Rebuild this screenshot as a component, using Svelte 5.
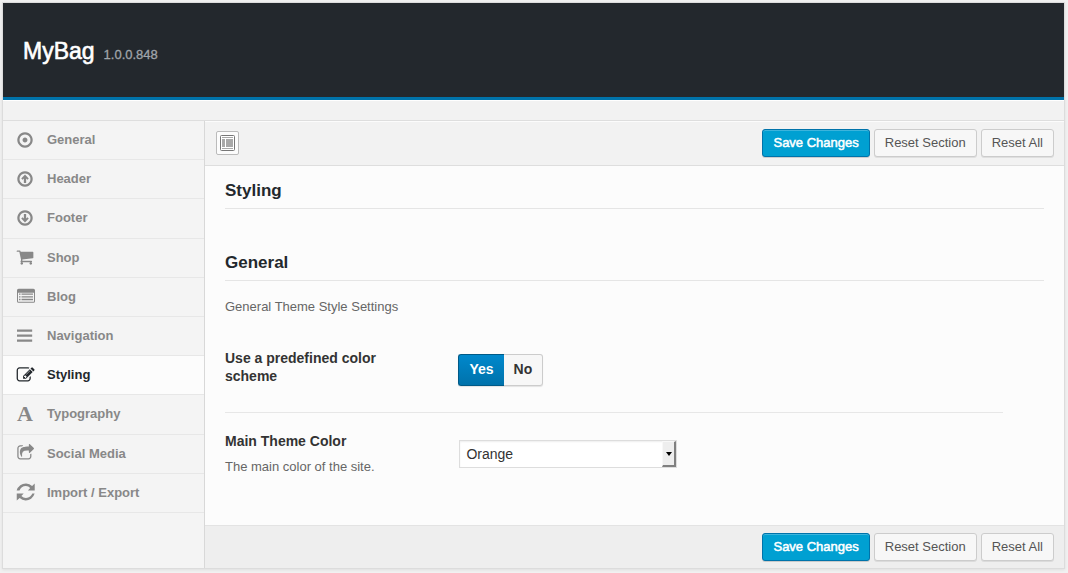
<script>
  const circle = 'M896 352q-148 0-273 73t-198 198-73 273 73 273 198 198 273 73 273-73 198-198 73-273-73-273-198-198-273-73zm768 544q0 209-103 385.5t-279.5 279.5-385.5 103-385.5-103-279.5-279.5-103-385.5 103-385.5 279.5-279.5 385.5-103 385.5 103 279.5 279.5 103 385.5z';

  const items = [
    { label: 'General', path: circle + 'M1140 896q0 101-71.500 172.500t-172.500 71.500-172.500-71.500-71.500-172.500 71.500-172.500 172.500-71.500 172.500 71.500 71.500 172.500z' },
    { label: 'Header', path: circle + 'M896 460L1270 850L1140 980L1010 850V1290H782V850L652 980L522 850Z' },
    { label: 'Footer', path: circle + 'M896 1332L1270 942L1140 812L1010 942V502H782V942L652 812L522 942Z' },
    { label: 'Shop', path: 'M704 1536q0 52-38 90t-90 38-90-38-38-90 38-90 90-38 90 38 38 90zm896 0q0 52-38 90t-90 38-90-38-38-90 38-90 90-38 90 38 38 90zm128-1088v512q0 24-16.5 42.5t-40.5 21.5l-1044 122q13 60 13 70 0 16-24 64h920q26 0 45 19t19 45-19 45-45 19h-1024q-26 0-45-19t-19-45q0-11 8-31.5t16-36 21.5-40 15.5-29.5l-177-823h-204q-26 0-45-19t-19-45 19-45 45-19h256q16 0 28.5 6.5t19.5 15.5 13 24.5 8 26 5.5 29.5 4.5 26h1201q26 0 45 19t19 45z' },
    { label: 'Blog', path: 'M260 170H1732Q1892 170 1892 330V1418Q1892 1578 1732 1578H260Q100 1578 100 1418V330Q100 170 260 170ZM200 560V1428Q200 1478 250 1478H1742Q1792 1478 1792 1428V560ZM300 640H450V780H300ZM550 640H1690V780H550ZM300 910H450V1050H300ZM550 910H1690V1050H550ZM300 1180H450V1320H300ZM550 1180H1690V1320H550Z' },
    { label: 'Navigation', path: 'M100 240H1610V480H100ZM100 740H1610V980H100ZM100 1240H1610V1480H100Z' },
    { label: 'Styling', shifted: true, path: 'M888 1184l116-116-152-152-116 116v56h96v96h56zm440-720q-16-16-33 1l-350 350q-17 17-1 33t33-1l350-350q17-17 1-33zm80 594v190q0 119-84.5 203.5t-203.5 84.5h-832q-119 0-203.5-84.5t-84.5-203.5v-832q0-119 84.5-203.5t203.5-84.5h832q63 0 117 25 15 7 18 23 3 17-9 29l-49 49q-14 14-32 8-23-6-45-6h-832q-66 0-113 47t-47 113v832q0 66 47 113t113 47h832q66 0 113-47t47-113v-126q0-13 9-22l64-64q15-15 35-7t20 29zm-96-738l288 288-672 672h-288v-288zm444 132l-92 92-288-288 92-92q28-28 68-28t68 28l152 152q28 28 28 68t-28 68z' },
    { label: 'Typography', glyph: 'A' },
    { label: 'Social Media', shifted: true, path: 'M1472 989v259q0 119-84.5 203.5t-203.5 84.5h-832q-119 0-203.5-84.5t-84.5-203.5v-832q0-119 84.5-203.5t203.5-84.5h255q13 0 22.5 9.5t9.5 22.5q0 27-26 32-77 26-133 60-10 4-16 4h-112q-66 0-113 47t-47 113v832q0 66 47 113t113 47h832q66 0 113-47t47-113v-214q0-19 18-29 28-13 54-37 16-16 35-8 21 9 21 29zm237-496l-384 384q-18 19-45 19-12 0-25-5-39-17-39-59v-192h-160q-323 0-438 131-119 137-74 473 3 23-20 34-8 2-12 2-16 0-26-13-10-14-21-31t-39.5-68.5-49.5-99.5-38.5-114-17.5-122q0-49 3.5-91t14-90 28-88 47-81.5 68.5-74 94.5-61.5 124.5-48.5 159.5-30.5 196.5-11h160v-192q0-42 39-59 13-5 25-5 26 0 45 19l384 384q19 19 19 45t-19 45z' },
    { label: 'Import / Export', shifted: true, path: 'M0 740Q100 410 360 220T950 40Q1290 50 1540 290L1800 60V740H1120L1350 490Q1180 310 920 300Q690 300 520 430T290 740ZM1792 1050Q1700 1380 1440 1570T880 1750Q550 1730 300 1500L10 1740V1050H700L470 1300Q670 1490 930 1490Q1170 1480 1340 1350T1560 1050Z' }
  ];

  let current = $state('Styling');
  let predefined = $state('yes');
  let color = $state('Orange');
</script>

{#snippet actions()}
  <div class="actions">
    <button type="submit" class="button primary">Save Changes</button>
    <button type="button" class="button">Reset Section</button>
    <button type="button" class="button">Reset All</button>
  </div>
{/snippet}

<form class="panel" onsubmit={(e) => e.preventDefault()}>
  <header class="masthead">
    <h1>MyBag</h1>
    <span class="version">1.0.0.848</span>
  </header>
  <div class="intro"></div>

  <div class="body">
    <nav class="sidebar" aria-label="Sections">
      <ul>
        {#each items as item}
          <li class:active={current === item.label}>
            <a href="#section" onclick={(e) => { e.preventDefault(); current = item.label; }}>
              {#if item.glyph}
                <span class="icon glyph" aria-hidden="true">{item.glyph}</span>
              {:else}
                <svg class="icon" viewBox={item.shifted ? '-64 0 1792 1792' : '0 0 1792 1792'} aria-hidden="true"><path fill-rule="evenodd" d={item.path} /></svg>
              {/if}
              <span>{item.label}</span>
            </a>
          </li>
        {/each}
      </ul>
    </nav>

    <main>
      <div class="bar top">
        <button type="button" class="expand" aria-label="Expand options">
          <svg viewBox="0 0 15 16" aria-hidden="true">
            <rect x="0.5" y="0.5" width="14" height="15" rx="1" fill="#fff" stroke="#777" />
            <path d="M2 2h11v1H2zM2 4h3v8H2zM6 4h7v8H6zM2 13h11v1H2z" fill="#a8a8a8" />
          </svg>
        </button>
        {@render actions()}
      </div>

      <div class="content">
        <h2>Styling</h2>
        <h2 class="second">General</h2>
        <p class="desc">General Theme Style Settings</p>

        <div class="field">
          <div class="title" id="scheme-title">Use a predefined color scheme</div>
          <div class="switch" role="radiogroup" aria-labelledby="scheme-title">
            <label class:on={predefined === 'yes'}><input type="radio" name="scheme" value="yes" bind:group={predefined} />Yes</label>
            <label class:on={predefined === 'no'}><input type="radio" name="scheme" value="no" bind:group={predefined} />No</label>
          </div>
        </div>

        <div class="field last">
          <div class="title">
            <label for="main-color">Main Theme Color</label>
            <p>The main color of the site.</p>
          </div>
          <div class="select">
            <select id="main-color" bind:value={color}>
              <option>Orange</option>
              <option>Blue</option>
              <option>Green</option>
            </select>
            <span class="arrow" aria-hidden="true"></span>
          </div>
        </div>
      </div>

      <div class="bar bottom">
        {@render actions()}
      </div>
    </main>
  </div>
</form>

<style>
  :global(body) {
    background: #f1f1f1;
    font-family: "Liberation Sans", Arial, sans-serif;
    font-size: 13px;
    color: #555;
  }
  .panel {
    margin: 2px 3px 3px 2px;
    border: 1px solid #dcdcdc;
    background: #f2f2f2;
    box-shadow: 0 1px 3px rgba(0, 0, 0, 0.08);
  }
  .masthead {
    display: flex;
    align-items: baseline;
    gap: 9px;
    box-sizing: border-box;
    height: 97px;
    padding: 33px 20px 0;
    background: #23282d;
    border-bottom: 3px solid #0073aa;
  }
  h1 {
    margin: 0;
    font-size: 23px;
    line-height: 30px;
    font-weight: normal;
    color: #fff;
    -webkit-text-stroke: 0.6px #fff;
  }
  .version {
    color: #a0a5aa;
    -webkit-text-stroke: 0.3px #a0a5aa;
  }
  .intro {
    height: 19px;
    border-top: 1px solid #fff;
    border-bottom: 1px solid #dedede;
  }
  .body {
    display: flex;
  }
  .sidebar {
    flex: 0 0 201px;
    background: #f4f4f4;
    border-right: 1px solid #d8d8d8;
  }
  ul {
    display: grid;
    grid-auto-rows: 1fr;
    height: 392px;
    margin: 0;
    padding: 0;
    list-style: none;
  }
  li {
    display: flex;
    border-bottom: 1px solid #e7e7e7;
  }
  li a {
    flex: 1;
    display: flex;
    align-items: center;
    gap: 13px;
    padding: 0 0 1px 13px;
    font-weight: bold;
    color: #888;
    text-decoration: none;
  }
  li.active {
    background: #fcfcfc;
  }
  li.active a {
    color: #23282d;
  }
  .icon {
    flex: none;
    width: 18px;
    height: 18px;
    fill: currentColor;
    overflow: visible;
  }
  .glyph {
    font: bold 22px/18px "Liberation Serif", serif;
    text-align: center;
  }
  main {
    flex: 1;
    min-width: 0;
    display: flex;
    flex-direction: column;
    background: #fcfcfc;
  }
  .bar {
    display: flex;
    align-items: center;
    box-sizing: border-box;
    padding: 0 10px 0 11px;
  }
  .top {
    height: 45px;
    padding-bottom: 2px;
    background: #f2f2f2;
    border-top: 1px solid #fcfcfc;
    border-bottom: 1px solid #dedede;
  }
  .bottom {
    height: 43px;
    background: #eee;
    border-top: 1px solid #e3e3e3;
  }
  .actions {
    display: flex;
    gap: 4px;
    margin-left: auto;
  }
  .button {
    box-sizing: border-box;
    height: 28px;
    padding: 0 10px;
    border: 1px solid #ccc;
    border-radius: 3px;
    background: #f7f7f7;
    box-shadow: 0 1px 0 rgba(0, 0, 0, 0.08);
    font: 13px/24px "Liberation Sans", Arial, sans-serif;
    color: #555;
  }
  .primary {
    background: #00a0d2;
    border-color: #0073aa;
    box-shadow: inset 0 1px 0 rgba(120, 200, 230, 0.5), 0 1px 0 rgba(0, 0, 0, 0.15);
    color: #fff;
    -webkit-text-stroke: 0.5px #fff;
  }
  .expand {
    display: flex;
    align-items: center;
    justify-content: center;
    box-sizing: border-box;
    width: 23px;
    height: 24px;
    padding: 0;
    border: 1px solid #bbb;
    border-radius: 2px;
    background: #fcfcfc;
  }
  .expand svg {
    width: 15px;
    height: 16px;
  }
  .content {
    padding: 12px 20px 39px;
  }
  h2 {
    margin: 0;
    padding-bottom: 4px;
    border-bottom: 1px solid #e5e5e5;
    font-size: 17px;
    line-height: 26px;
    color: #23282d;
  }
  .second {
    margin-top: 41px;
  }
  .desc {
    margin: 16px 0 0;
    line-height: 20px;
    color: #666;
  }
  .field {
    display: flex;
    align-items: flex-start;
    margin-right: 41px;
    padding: 32px 0 27px;
    border-bottom: 1px solid #e7e7e7;
  }
  .last {
    border-bottom: 0;
    padding: 19px 0 10px;
  }
  .title {
    box-sizing: border-box;
    width: 30%;
    padding-right: 60px;
    font-size: 14px;
    line-height: 18px;
    font-weight: bold;
    color: #333;
  }
  .title p {
    margin: 8px 0 0;
    font-size: 13px;
    font-weight: normal;
    color: #666;
    white-space: nowrap;
  }
  .switch {
    display: flex;
    margin: 5px 0 -4px;
    box-shadow: 0 1px 1px rgba(0, 0, 0, 0.1);
    border-radius: 3px;
  }
  .switch label {
    box-sizing: border-box;
    height: 32px;
    padding: 0 10px;
    border: 1px solid #ccc;
    border-left: 0;
    border-radius: 0 3px 3px 0;
    background: #f7f7f7;
    font-size: 14px;
    line-height: 29px;
    font-weight: bold;
    color: #333;
  }
  .switch label:first-child {
    border-left: 1px solid #ccc;
    border-radius: 3px 0 0 3px;
  }
  .switch label.on {
    border-color: #005a87;
    background: linear-gradient(#0088cc, #0072ab);
    color: #fff;
  }
  .switch label:first-child.on {
    border-right: 0;
  }
  .switch input {
    position: absolute;
    width: 1px;
    height: 1px;
    margin: 0;
    opacity: 0;
  }
  .select {
    position: relative;
    width: 28%;
    margin: 8px 0 0 1px;
  }
  select {
    appearance: none;
    display: block;
    width: 100%;
    height: 28px;
    padding: 0 20px 1px 6px;
    border: 1px solid #ddd;
    border-radius: 0;
    background: #fff;
    box-shadow: inset 0 1px 2px rgba(0, 0, 0, 0.07);
    font: 14px/24px "Liberation Sans", Arial, sans-serif;
    color: #333;
  }
  .arrow {
    position: absolute;
    top: 1px;
    right: 1px;
    bottom: 1px;
    width: 14px;
    box-sizing: border-box;
    border: solid;
    border-width: 1px 2px 2px 1px;
    border-color: #f8f8f8 #808080 #808080 #f8f8f8;
    background: #eee;
    display: grid;
    place-items: center;
    pointer-events: none;
  }
  .arrow::after {
    content: "";
    border: 3px solid transparent;
    border-top: 4px solid #000;
    border-bottom: 0;
  }
</style>
